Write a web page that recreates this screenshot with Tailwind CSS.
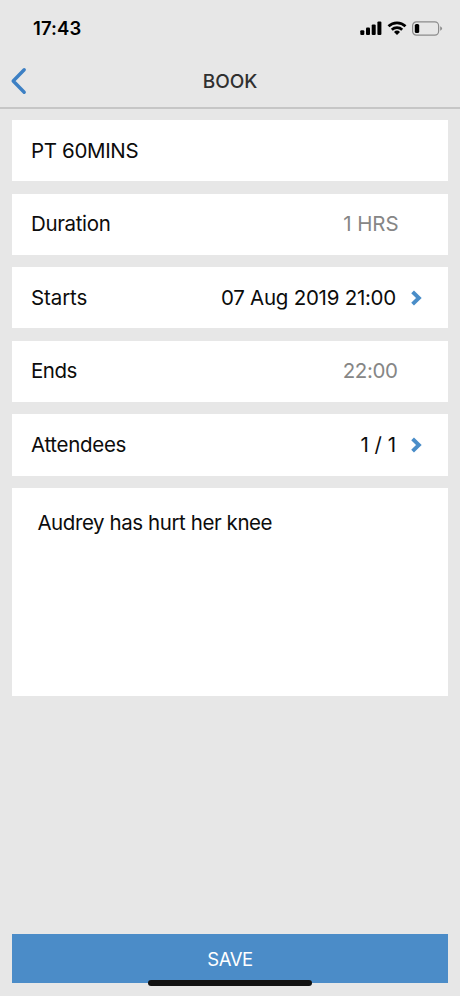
<!DOCTYPE html>
<html lang="en">
<head>
<meta charset="utf-8">
<meta name="viewport" content="width=device-width, initial-scale=1">
<title>Book</title>
<script src="https://cdn.jsdelivr.net/npm/@tailwindcss/browser@4"></script>
</head>
<body class="bg-[#e7e7e7]">
<div class="relative flex h-[996px] w-[460px] flex-col overflow-hidden bg-[#e7e7e7] font-['Inter',sans-serif] text-[20.5px] leading-6 text-[#0c0c0c]">
  <header class="flex h-[109px] shrink-0 flex-col border-b-2 border-[#c6c6c6]">
    <div class="flex h-14 items-center justify-between pr-[17px] pl-[33px]">
      <span class="text-[18.5px] font-semibold tracking-[0.1px] text-black">17:43</span>
      <div class="flex items-center">
        <svg class="h-[14px] w-[22px]" viewBox="0 0 22 14"><rect x="0.3" y="9.2" width="4" height="4.8" rx="1.1"/><rect x="6" y="6.6" width="4" height="7.4" rx="1.1"/><rect x="11.7" y="3.4" width="4" height="10.6" rx="1.1"/><rect x="17.4" y="0.5" width="4" height="13.5" rx="1.1"/></svg>
        <svg class="ml-[5px] h-[14px] w-5" viewBox="0 0 20 14" fill="none" stroke="#000" stroke-width="2.7"><path d="M1.5 5.3a12.3 12.3 0 0 1 17 0"/><path d="M4.8 8.7a7.5 7.5 0 0 1 10.4 0"/><path d="M10 14l-3-3.1a4.5 4.5 0 0 1 6 0z" fill="#000" stroke="none"/></svg>
        <svg class="ml-[5px] h-[15px] w-[31px]" viewBox="0 0 31 15"><rect x="0.6" y="0.9" width="26" height="13.2" rx="3.8" fill="none" stroke="#8c8c8c" stroke-width="1.2"/><rect x="2.8" y="3" width="4.4" height="9" rx="1.6"/><path d="M28.2 5.2q1.9.7 1.9 2.3t-1.9 2.3z" fill="#8c8c8c"/></svg>
      </div>
    </div>
    <div class="grid flex-1 grid-cols-[1fr_auto_1fr] items-center">
      <svg class="ml-[10px] h-[28px] w-[18px] -translate-y-px" viewBox="0 0 18 28" fill="none" stroke="#3d80c4" stroke-width="3.4" stroke-linecap="round" stroke-linejoin="round"><path d="M14.2 2.8 3.2 14l11 11.2"/></svg>
      <h1 class="text-[19px] font-medium text-[#303030]">BOOK</h1>
    </div>
  </header>
  <main class="flex flex-col gap-[12.3px] pt-[11px] pr-[12.5px] pl-[12.4px]">
    <div class="flex h-[61.3px] items-center bg-white pl-[18.6px]"><span class="tracking-[-0.35px]">PT 60MINS</span></div>
    <div class="flex h-[61.3px] items-center justify-between bg-white pr-[49px] pl-[18.6px]"><span class="tracking-[-0.35px]">Duration</span><span class="text-[#868686] tracking-[-0.1px]">1 HRS</span></div>
    <div class="flex h-[61.3px] items-center bg-white pr-[25.5px] pl-[18.6px]"><span class="tracking-[-0.1px]">Starts</span><span class="ml-auto tracking-[-0.25px]">07 Aug 2019 21:00</span><svg class="ml-[15px] h-4 w-[11px]" viewBox="0 0 11 16" fill="none" stroke="#4a8dc8" stroke-width="3.9"><path d="M1.6 1.8 7.9 8l-6.3 6.2"/></svg></div>
    <div class="flex h-[61.3px] items-center justify-between bg-white pr-[50px] pl-[18.6px]"><span class="tracking-[-0.45px]">Ends</span><span class="text-[#868686] tracking-[-0.4px]">22:00</span></div>
    <div class="flex h-[61.3px] items-center bg-white pr-[25.5px] pl-[18.6px]"><span class="tracking-[-0.3px]">Attendees</span><span class="ml-auto tracking-[0px]">1 / 1</span><svg class="ml-[15px] h-4 w-[11px]" viewBox="0 0 11 16" fill="none" stroke="#4a8dc8" stroke-width="3.9"><path d="M1.6 1.8 7.9 8l-6.3 6.2"/></svg></div>
    <div class="h-[208.5px] bg-white pt-[23.4px] pl-[25px]"><span class="tracking-[-0.42px]">Audrey has hurt her knee</span></div>
  </main>
  <button class="mt-auto mr-[12.5px] mb-[13px] ml-[12.4px] flex h-[48.7px] shrink-0 items-center justify-center bg-[#4b8cc8] text-[18.5px] tracking-[-0.5px] text-white">SAVE</button>
  <div class="absolute bottom-[10px] left-[148px] h-[6px] w-[164px] rounded-full bg-[#111]"></div>
</div>
</body>
</html>
